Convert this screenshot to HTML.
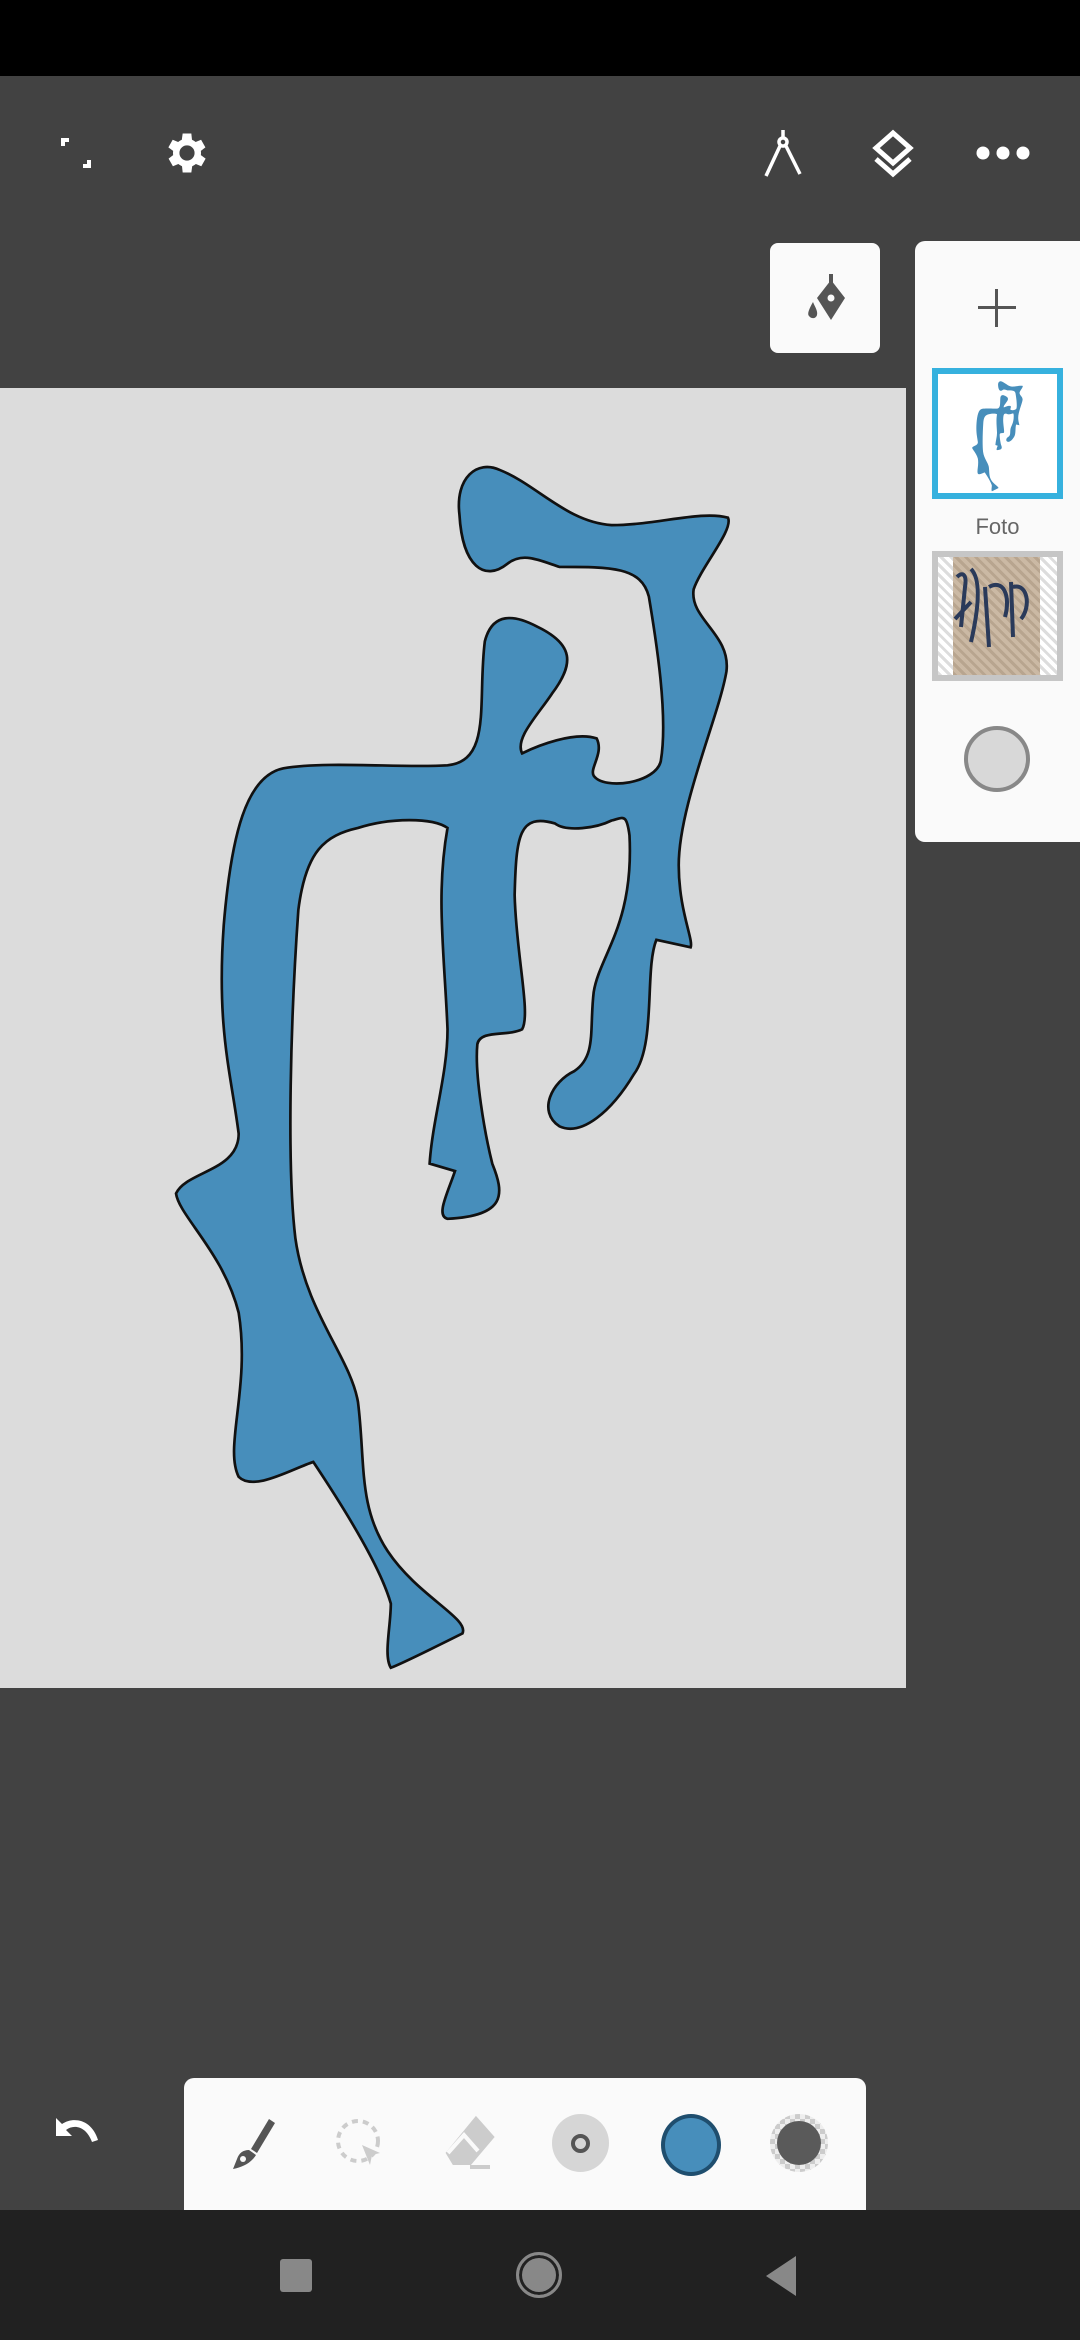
<!DOCTYPE html>
<html><head><meta charset="utf-8"><style>
html,body{margin:0;padding:0}
body{width:1080px;height:2340px;background:#424242;position:relative;overflow:hidden;font-family:"Liberation Sans",sans-serif}
.abs{position:absolute}
</style></head><body>
<div class="abs" style="left:0;top:0;width:1080px;height:76px;background:#000"></div>
<div class="abs" style="left:0;top:388px;width:906px;height:1300px;background:#dcdcdc"></div>

<svg width="0" height="0" style="position:absolute"><defs><path id="blob" d="M308,345 C305,320 320,308 335,315 C360,325 380,350 410,352 C440,352 470,342 488,347 C492,355 470,380 465,395 C462,415 490,425 487,450 C482,480 455,540 455,580 C455,610 465,630 463,635 L440,630 C432,650 440,700 425,720 C410,745 390,762 375,755 C360,745 370,725 385,718 C400,708 395,690 398,665 C402,640 425,620 422,560 C420,545 418,548 410,550 C400,555 380,558 372,552 C348,545 346,560 345,600 C346,640 356,680 350,690 C340,695 322,690 320,700 C318,720 325,760 330,780 C338,800 340,815 300,817 C292,815 300,800 305,785 L288,780 C290,750 300,720 300,690 C298,640 292,600 300,555 C290,548 262,548 240,555 C218,560 205,570 200,610 C195,680 192,780 198,830 C205,880 235,910 240,940 C245,980 240,1010 260,1040 C280,1070 315,1085 310,1095 C290,1105 270,1115 262,1118 C257,1110 262,1090 262,1075 C255,1050 230,1010 210,980 C195,985 170,1000 160,990 C150,970 168,930 160,880 C150,840 120,815 118,800 C125,785 160,785 160,760 C155,720 145,690 150,620 C155,560 165,520 190,515 C220,510 270,515 300,513 C330,510 320,470 325,430 C330,410 345,412 360,420 C385,432 385,445 370,465 C360,480 345,495 350,505 C360,500 385,490 400,495 C405,505 395,515 398,520 C405,530 440,525 443,510 C448,480 440,430 435,400 C430,380 410,380 375,380 C360,375 350,370 340,378 C325,390 310,380 308,345 Z"/></defs></svg>

<svg class="abs" style="left:0;top:0" width="1080" height="2340" viewBox="0 0 724 1568.6">
<use href="#blob" fill="#478ebb" stroke="#111" stroke-width="1.8"/>
</svg>

<!-- top icons -->
<svg class="abs" style="left:56px;top:133px" width="40" height="40" viewBox="0 0 40 40" fill="#fff"><path d="M5 5h8v4h-4v4h-4z M35 35h-8v-4h4v-4h4z"/></svg>
<svg class="abs" style="left:161px;top:127px" width="52" height="52" viewBox="0 0 24 24" fill="#fff"><path d="M19.4 13a7.5 7.5 0 000-2l2.1-1.6-2-3.5-2.5 1a7 7 0 00-1.7-1L15 3h-4l-.4 2.9a7 7 0 00-1.7 1l-2.5-1-2 3.5L6.6 11a7.5 7.5 0 000 2l-2.1 1.6 2 3.5 2.5-1a7 7 0 001.7 1L11 21h4l.4-2.9a7 7 0 001.7-1l2.5 1 2-3.5zM13 15.5a3.5 3.5 0 110-7 3.5 3.5 0 010 7z" transform="translate(-1 0)"/></svg>
<svg class="abs" style="left:760px;top:128px" width="46" height="50" viewBox="0 0 46 50" fill="none" stroke="#fff" stroke-width="3.5"><line x1="23" y1="2" x2="23" y2="10"/><circle cx="23" cy="14" r="4"/><path d="M20 18 L6 48 M26 18 L40 46"/></svg>
<svg class="abs" style="left:867px;top:128px" width="52" height="52" viewBox="0 0 52 52" fill="none" stroke="#fff" stroke-width="5"><path d="M26 5 L43 20 L26 35 L9 20 Z"/><path d="M9 31 L26 46 L43 31"/></svg>
<svg class="abs" style="left:975px;top:143px" width="56" height="20" viewBox="0 0 56 20" fill="#fff"><circle cx="8" cy="10" r="6.5"/><circle cx="28" cy="10" r="6.5"/><circle cx="48" cy="10" r="6.5"/></svg>

<!-- fill button -->
<div class="abs" style="left:770px;top:243px;width:110px;height:110px;background:#fafafa;border-radius:8px"></div>
<svg class="abs" style="left:795px;top:268px" width="60" height="60" viewBox="0 0 60 60"><path d="M36 12 L50 30 L36 52 L22 30 Z" fill="#555"/><line x1="36" y1="6" x2="36" y2="22" stroke="#555" stroke-width="4"/><circle cx="36" cy="30" r="3.5" fill="#fafafa"/><path d="M18 34 C14 41 12 46 14 48 C16 51 21 51 22 47 C23 43 20 39 18 34Z" fill="#555"/></svg>

<!-- layer panel -->
<div class="abs" style="left:915px;top:241px;width:165px;height:601px;background:#fafafa;border-radius:10px 0 0 10px"></div>
<div class="abs" style="left:978px;top:306px;width:38px;height:3px;background:#555"></div>
<div class="abs" style="left:995px;top:289px;width:3px;height:38px;background:#555"></div>
<div class="abs" style="left:932px;top:368px;width:131px;height:131px;box-sizing:border-box;border:6px solid #36b1de;background:#fff"></div>
<svg class="abs" style="left:938px;top:374px" width="119" height="119" viewBox="0 260 607 871" preserveAspectRatio="xMidYMid meet"><use href="#blob" fill="#478ebb"/></svg>
<div class="abs" style="left:932px;top:514px;width:131px;text-align:center;color:#666;font-size:22px">Foto</div>
<div class="abs" style="left:932px;top:551px;width:131px;height:130px;box-sizing:border-box;border:6px solid #c6c6c6;background:repeating-linear-gradient(45deg,#ddd 0 3px,#fff 3px 7px)"></div>
<div class="abs" style="left:953px;top:557px;width:87px;height:118px;background:repeating-linear-gradient(45deg,#b8a58f 0 3px,#cbb9a4 3px 7px)"></div>
<svg class="abs" style="left:953px;top:557px" width="87" height="118" viewBox="0 0 87 118" fill="none" stroke="#2a3a5a" stroke-width="4"><path d="M4 20 C10 14 14 18 12 30 L8 70 M18 12 C28 22 26 50 18 85 M32 30 L36 90 M36 30 C50 22 58 38 52 60 M58 25 L60 80 M60 30 C75 26 78 50 68 62 M2 62 L18 45"/></svg>
<div class="abs" style="left:964px;top:726px;width:58px;height:58px;border-radius:50%;background:#d8d8d8;border:4px solid #888"></div>

<!-- undo -->
<svg class="abs" style="left:52px;top:2112px" width="50" height="40" viewBox="0 0 50 40" fill="#fff"><path d="M4 6 L4 24 L20 24 L14 18 C22 12 34 14 40 30 L46 28 C40 8 22 4 10 12 Z"/></svg>

<!-- bottom toolbar -->
<div class="abs" style="left:184px;top:2078px;width:682px;height:140px;background:#fafafa;border-radius:10px 10px 0 0"></div>
<svg class="abs" style="left:221px;top:2113px" width="60" height="60" viewBox="0 0 60 60" fill="#555"><path d="M48 6 L54 10 L36 40 L30 36 Z"/><path d="M28 37 L35 42 C30 50 22 54 12 56 L16 46 C18 40 22 37 28 37 Z"/><circle cx="22" cy="46" r="3" fill="#fafafa"/></svg>
<svg class="abs" style="left:330px;top:2113px" width="60" height="60" viewBox="0 0 60 60"><circle cx="28" cy="28" r="20" fill="none" stroke="#ccc" stroke-width="4" stroke-dasharray="6 5"/><path d="M32 32 L50 40 L42 42 L40 52 Z" fill="#ccc"/></svg>
<svg class="abs" style="left:440px;top:2113px" width="60" height="60" viewBox="0 0 60 60" fill="none" stroke="#ccc" stroke-width="4"><path d="M36 6 L52 24 L30 50 L14 50 L8 40 Z" fill="#ccc"/><path d="M8 40 L24 22 L38 38" stroke="#fafafa"/><path d="M30 54 L50 54"/></svg>
<div class="abs" style="left:552px;top:2114px;width:57px;height:58px;border-radius:50%;background:#d6d6d6"></div>
<div class="abs" style="left:571px;top:2134px;width:11px;height:11px;border-radius:50%;border:4px solid #555"></div>
<div class="abs" style="left:661px;top:2114px;width:52px;height:54px;border-radius:50%;background:#478ebb;border:4px solid #1f4e6e"></div>
<div class="abs" style="left:770px;top:2114px;width:58px;height:58px;border-radius:50%;background:repeating-conic-gradient(#ccc 0 25%,#eee 0 50%) 0 0/10px 10px"></div>
<div class="abs" style="left:777px;top:2121px;width:44px;height:44px;border-radius:50%;background:#5a5a5a"></div>

<!-- nav bar -->
<div class="abs" style="left:0;top:2210px;width:1080px;height:130px;background:#212121"></div>
<div class="abs" style="left:280px;top:2259px;width:32px;height:33px;background:#888;border-radius:3px"></div>
<div class="abs" style="left:516px;top:2252px;width:40px;height:40px;border-radius:50%;border:3px solid #888;background:#888;box-shadow:inset 0 0 0 3px #212121"></div>
<svg class="abs" style="left:762px;top:2256px" width="36" height="40" viewBox="0 0 36 40"><path d="M34 0 L34 40 L4 20 Z" fill="#888"/></svg>
</body></html>
